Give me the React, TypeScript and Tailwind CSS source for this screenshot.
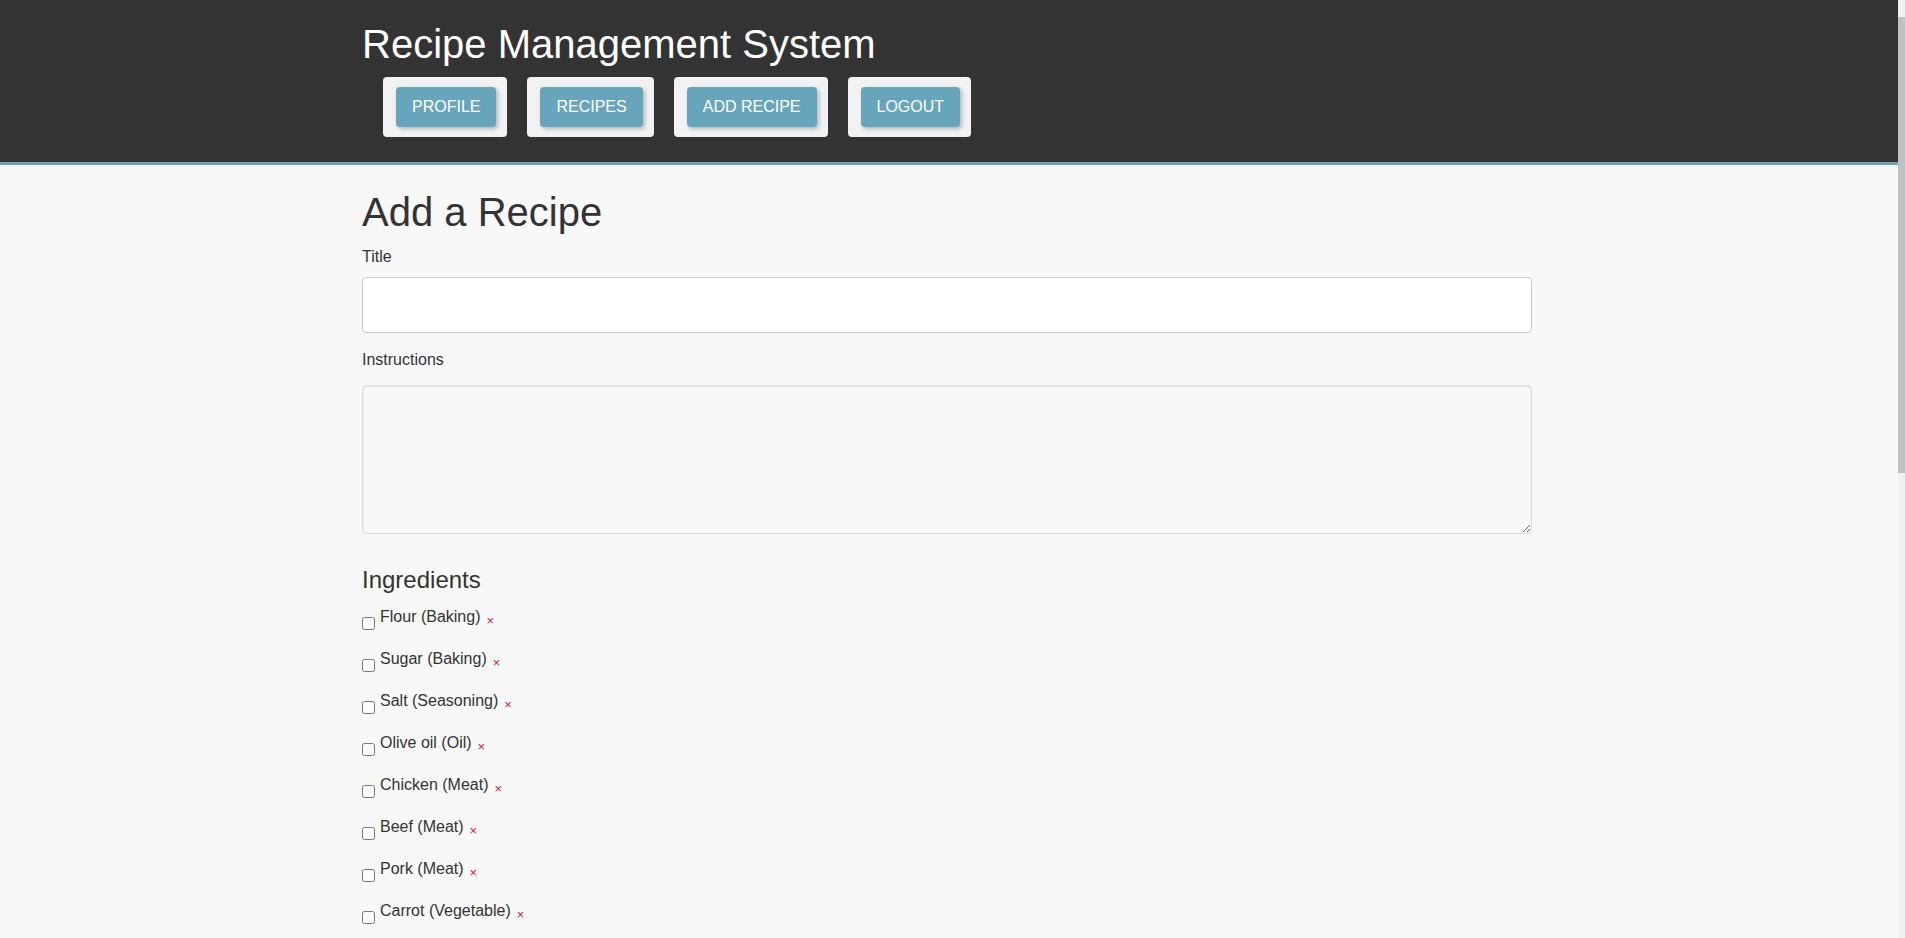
import React from "react";

const navItems = ["PROFILE", "RECIPES", "ADD RECIPE", "LOGOUT"];

const ingredients = [
  "Flour (Baking)",
  "Sugar (Baking)",
  "Salt (Seasoning)",
  "Olive oil (Oil)",
  "Chicken (Meat)",
  "Beef (Meat)",
  "Pork (Meat)",
  "Carrot (Vegetable)",
];

export default function App() {
  return (
    <div className="flex h-[938px] overflow-hidden bg-[#f8f8f8] text-[#333] font-['Liberation_Sans',Arial,sans-serif]">
      <div className="flex-1 min-w-0">
        <header className="bg-[#333333] border-b-[3px] border-[#67a5bd]">
          <div className="w-[1174px] pr-[4px] mx-auto pt-[21px] pb-[25px]">
            <h1 className="text-[40px] leading-[46px] text-white font-normal">
              Recipe Management System
            </h1>
            <nav className="mt-[10px] ml-[21px] flex gap-[20px]">
              {navItems.map((t) => (
                <div
                  key={t}
                  className="bg-[#f2f2f2] rounded-[4px] pl-[13px] pr-[11px] py-[10px]"
                >
                  <button className="h-[40px] px-[16px] bg-[#67a5bd] text-white text-[16px] leading-[18px] rounded-[4px] shadow-[2px_2px_4px_rgba(0,0,0,0.25)]">
                    {t}
                  </button>
                </div>
              ))}
            </nav>
          </div>
        </header>

        <main className="w-[1174px] pr-[4px] mx-auto pt-[24px]">
          <h2 className="text-[40px] leading-[46px] font-normal">
            Add a Recipe
          </h2>
          <label className="block mt-[13px] text-[16px] leading-[18px]">
            Title
          </label>
          <input
            type="text"
            className="block mt-[11px] w-full h-[56px] bg-white border border-[#cccccc] rounded-[4px] px-3 text-[16px] outline-none"
          />
          <label className="block mt-[18px] text-[16px] leading-[18px]">
            Instructions
          </label>
          <textarea className="block mt-[16px] w-full h-[149px] bg-[#f8f8f8] border border-[#dcdcdc] rounded-[4px] shadow-[inset_0_1px_3px_rgba(0,0,0,0.08)] px-3 py-2 text-[16px] outline-none" />

          <h3 className="mt-[32px] text-[24px] leading-[28px] font-normal">
            Ingredients
          </h3>
          <ul className="mt-[14px] flex flex-col gap-[24px]">
            {ingredients.map((ing) => (
              <li key={ing} className="flex items-start h-[18px]">
                <input
                  type="checkbox"
                  className="m-0 mt-[9px] mr-[5px] w-[13px] h-[13px]"
                />
                <span className="text-[16px] leading-[18px]">{ing}</span>
                <span className="ml-[6px] mt-[6px] text-[13px] leading-[14px] text-[#dc143c]">
                  ×
                </span>
              </li>
            ))}
          </ul>
        </main>
      </div>
      <div className="w-[7px] shrink-0 bg-[#f1f1f1] pt-[17px]">
        <div className="h-[456px] bg-[#c1c1c1]" />
      </div>
    </div>
  );
}
